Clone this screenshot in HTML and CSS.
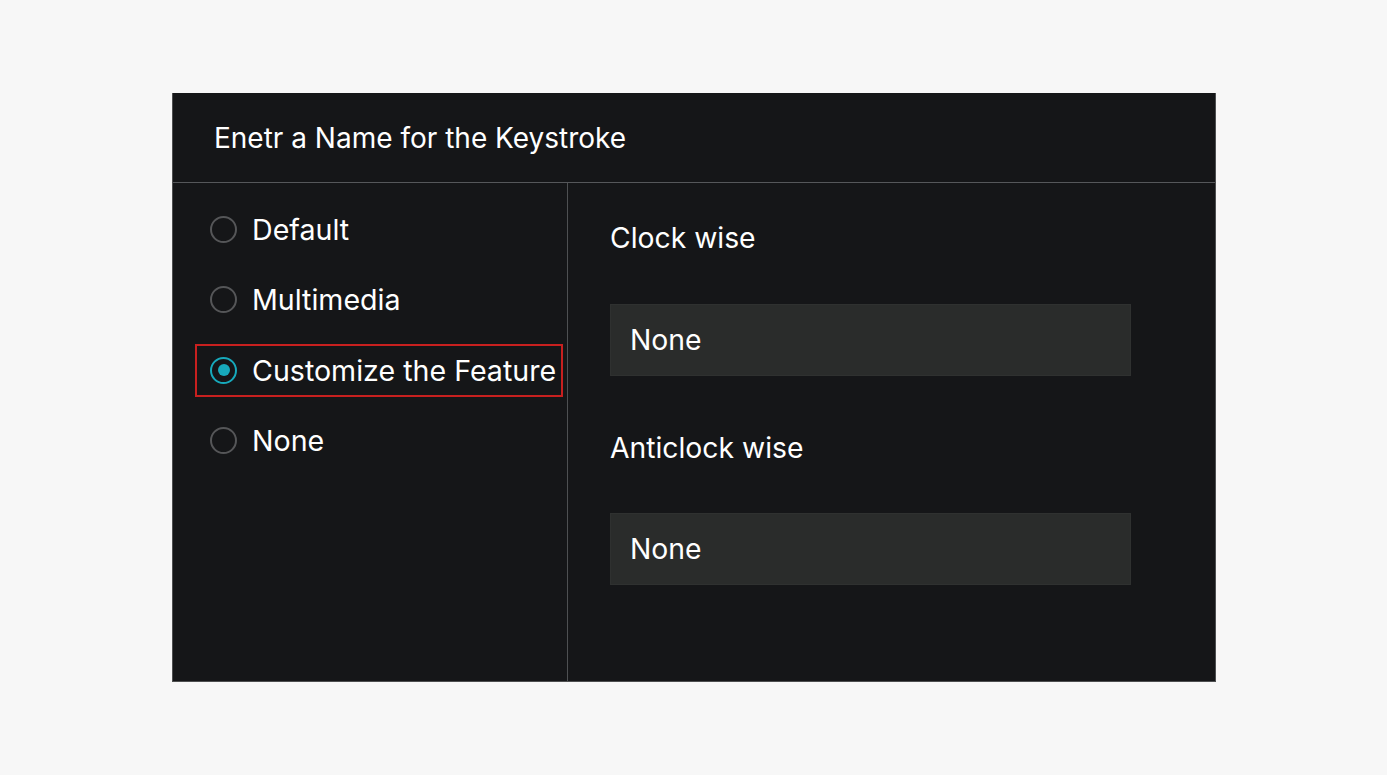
FILE: index.html
```html
<!DOCTYPE html>
<html lang="en">
<head>
<meta charset="utf-8">
<title>Keystroke</title>
<link rel="stylesheet" href="styles.css">
</head>
<body>
<div class="dialog">
  <div class="dialog-header">Enetr a Name for the Keystroke</div>
  <div class="dialog-body">
    <div class="options">
      <div class="option"><span class="radio"></span><span class="option-label">Default</span></div>
      <div class="option"><span class="radio"></span><span class="option-label">Multimedia</span></div>
      <div class="option option-selected"><span class="radio radio-on"></span><span class="option-label">Customize the Feature</span></div>
      <div class="option"><span class="radio"></span><span class="option-label">None</span></div>
    </div>
    <div class="settings">
      <div class="field-label">Clock wise</div>
      <div class="field-box">None</div>
      <div class="field-label field-label-second">Anticlock wise</div>
      <div class="field-box">None</div>
    </div>
  </div>
</div>
</body>
</html>
```

FILE: styles.css
```css
* { box-sizing: border-box; }
html, body { margin: 0; padding: 0; }
body {
  background: #f7f7f7;
  font-family: Inter, "Noto Sans", sans-serif;
  color: #ffffff;
  height: 775px;
  overflow: hidden;
}
.dialog {
  margin: 93px 0 0 172px;
  width: 1044px;
  height: 589px;
  background: #151618;
  border: 1px solid #4e4f50;
  border-top: none;
  display: flex;
  flex-direction: column;
}
.dialog-header {
  height: 90px;
  border-bottom: 1px solid #55575a;
  display: flex;
  align-items: center;
  padding-left: 41px;
  font-size: 28px;
}
.dialog-body {
  flex: 1;
  display: flex;
}
.options {
  width: 395px;
  border-right: 1px solid #4e5052;
  padding: 19.5px 4px 0 22px;
  display: flex;
  flex-direction: column;
  gap: 17.5px;
}
.option {
  height: 53px;
  border: 2px solid transparent;
  display: flex;
  align-items: center;
  padding-left: 13px;
  gap: 15px;
  font-size: 28.6px;
}
.option-selected {
  border-color: #c8201f;
}
.radio {
  width: 27px;
  height: 27px;
  border-radius: 50%;
  border: 2px solid #555658;
  flex: none;
  display: flex;
  align-items: center;
  justify-content: center;
}
.radio-on {
  border: 2px solid #17a9bb;
}
.radio-on::after {
  content: "";
  width: 12px;
  height: 12px;
  border-radius: 50%;
  background: #17a9bb;
}
.settings {
  flex: 1;
  padding: 38px 0 0 42px;
  display: flex;
  flex-direction: column;
}
.field-label {
  height: 34px;
  line-height: 34px;
  font-size: 28.3px;
  margin-bottom: 49px;
}
.field-label-second {
  margin-top: 55px;
  margin-bottom: 48px;
}
.field-box {
  width: 521px;
  height: 72px;
  background: #2a2c2b;
  border: 1px solid #2f3130;
  display: flex;
  align-items: center;
  padding-left: 19px;
  font-size: 28.3px;
}
```
